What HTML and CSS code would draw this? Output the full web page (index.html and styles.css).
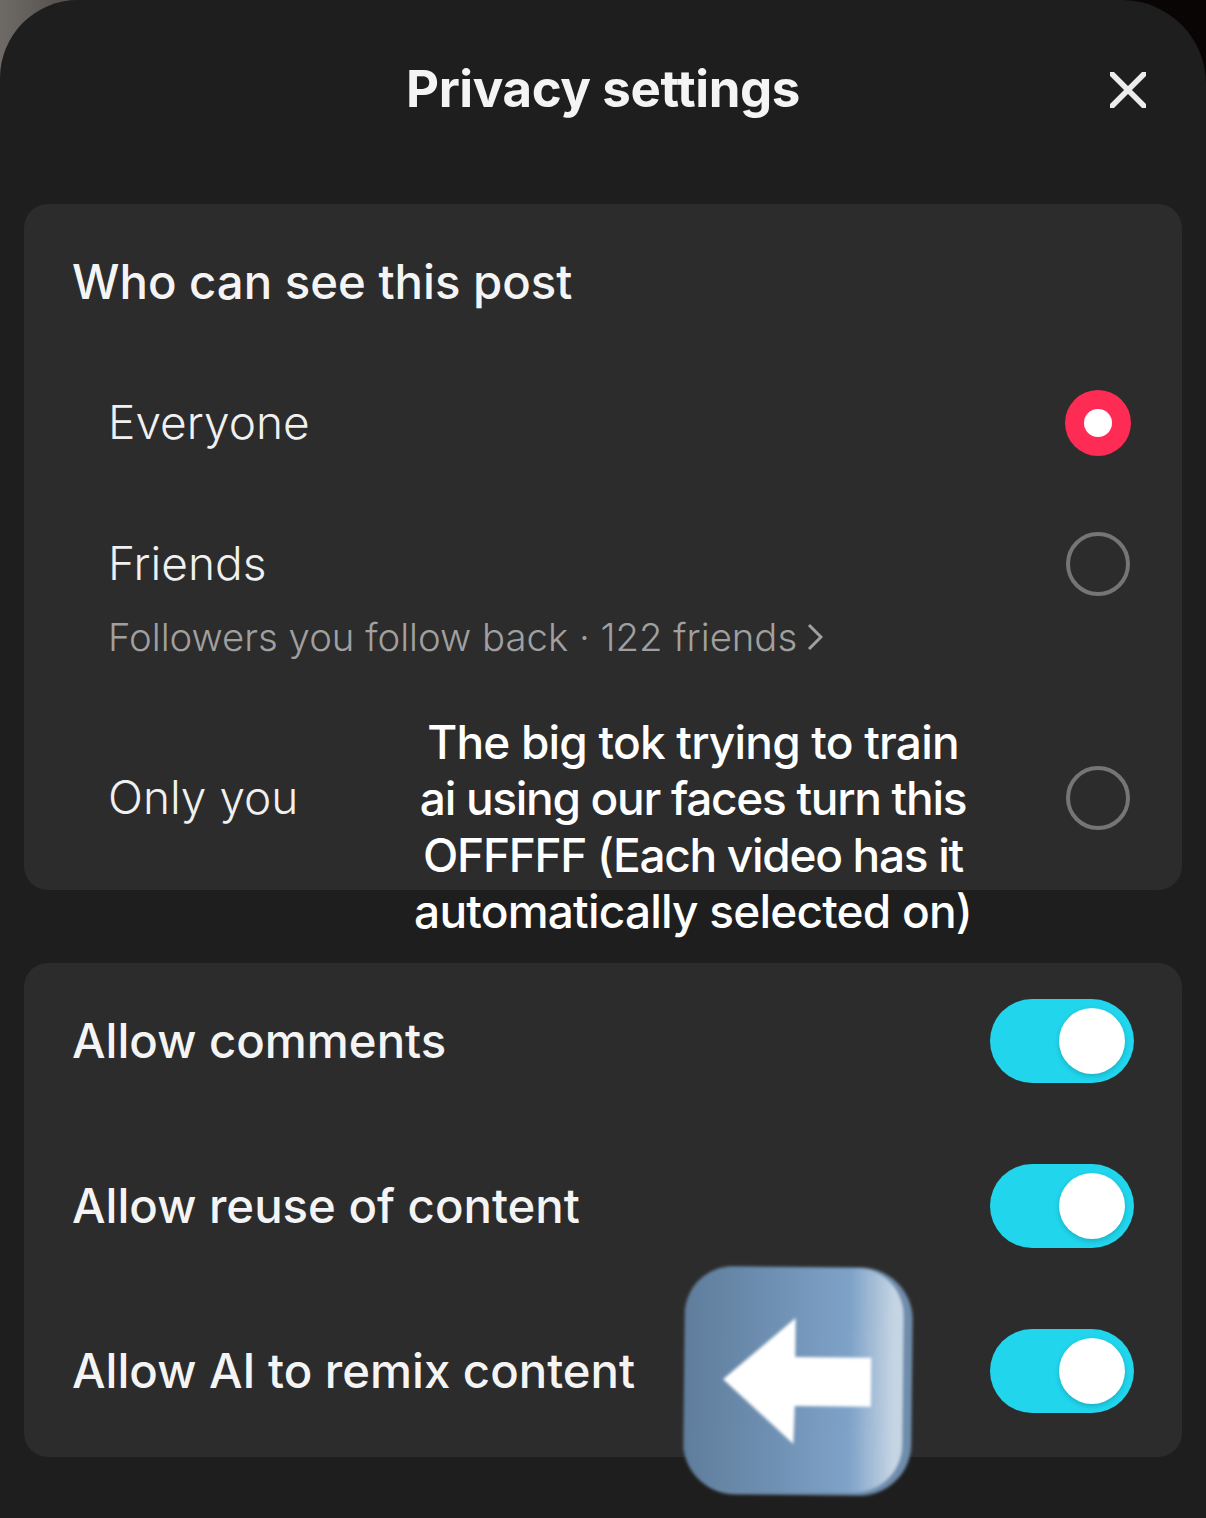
FILE: index.html
```html
<!DOCTYPE html>
<html lang="en">
  <head>
    <meta charset="UTF-8" />
    <title>Privacy settings</title>
    <link rel="stylesheet" href="styles.css">
  </head>
  <body>
    <div class="sheet">
      <!-- HEADER -->
      <div class="header">
        <h1 class="title">Privacy settings</h1>
        <svg class="close" viewBox="0 0 36 36" aria-label="Close">
          <path d="M2 2 L34 34 M34 2 L2 34" />
        </svg>
      </div>

      <!-- WHO CAN SEE -->
      <div class="panel panel-audience">
        <h2 class="panel-title">Who can see this post</h2>
        <div class="option option-first">
          <span class="label">Everyone</span>
          <span class="radio radio-on"></span>
        </div>
        <div class="option option-friends">
          <span class="label">Friends</span>
          <span class="radio"></span>
        </div>
        <div class="hint">
          Followers you follow back · 122 friends
          <svg class="chevron" viewBox="0 0 16 28"><path d="M2 2 L14 14 L2 26" /></svg>
        </div>
        <div class="option option-last">
          <span class="label">Only you</span>
          <span class="radio"></span>
        </div>
      </div>

      <!-- TOGGLES -->
      <div class="panel panel-toggles">
        <div class="toggle-row">
          <span class="toggle-label">Allow comments</span>
          <span class="toggle"><span class="knob"></span></span>
        </div>
        <div class="toggle-row">
          <span class="toggle-label">Allow reuse of content</span>
          <span class="toggle"><span class="knob"></span></span>
        </div>
        <div class="toggle-row">
          <span class="toggle-label">Allow AI to remix content</span>
          <span class="toggle"><span class="knob"></span></span>
        </div>
      </div>
    </div>

    <!-- Overlays burned into the video frame -->
    <div class="caption">
      <div>The big tok trying to train</div>
      <div class="caption-tight">ai using our faces turn this</div>
      <div class="caption-tight">OFFFFF (Each video has it</div>
      <div>automatically selected on)</div>
    </div>
    <div class="sticker">
      <div class="sticker-face"></div>
      <svg class="sticker-arrow" viewBox="0 0 150 128">
        <path d="M0 62 L72 0 L72 39 L148 39 L148 88 L72 88 L71 126 Z" />
      </svg>
    </div>
  </body>
</html>
```

FILE: styles.css
```css
* {
  box-sizing: border-box;
}

html,
body {
  margin: 0;
  height: 1518px;
  overflow: hidden;
}

body {
  font-family: Inter, "Liberation Sans", sans-serif;
  color: #f4f4f4;
  position: relative;
  background: linear-gradient(90deg, #6e6a66 0, #4a4542 8%, #120a08 30%, #0a0505 100%);
}

.sheet {
  height: 1518px;
  background: #1e1e1e;
  border-radius: 78px 84px 0 0;
  padding: 0 24px;
}

/* Header */
.header {
  height: 204px;
  position: relative;
}

.title {
  margin: 0;
  padding-top: 59px;
  text-align: center;
  font-size: 51px;
  line-height: 60px;
  font-weight: 700;
  letter-spacing: -0.4px;
}

.close {
  position: absolute;
  right: 36px;
  top: 72px;
  width: 36px;
  height: 36px;
}

.close path {
  fill: none;
  stroke: #ececec;
  stroke-width: 5.5;
  stroke-linecap: round;
}

/* Panels */
.panel {
  background: #2c2c2c;
  border-radius: 24px;
}

.panel-audience {
  height: 686px;
  padding: 53px 51px 0 48px;
}

.panel-title {
  margin: 0;
  font-size: 47.3px;
  line-height: 50px;
  font-weight: 500;
}

.option {
  display: flex;
  justify-content: space-between;
  align-items: center;
  height: 66px;
  padding-left: 36px;
}

.option-first {
  margin-top: 83px;
}

.option-friends {
  margin-top: 75px;
}

.option-last {
  margin-top: 108px;
}

.label {
  padding-bottom: 2px;
  font-size: 46px;
  font-weight: 300;
  color: #f0f0f0;
}

.hint {
  margin-top: 20px;
  padding-left: 36px;
  font-size: 38.3px;
  line-height: 40px;
  font-weight: 300;
  color: #a0a0a0;
  display: flex;
  align-items: center;
  gap: 10px;
}

.chevron {
  width: 16px;
  height: 28px;
}

.chevron path {
  fill: none;
  stroke: #a0a0a0;
  stroke-width: 3;
}

.radio {
  width: 64px;
  height: 64px;
  margin-right: 1px;
  border: 4px solid #757575;
  border-radius: 50%;
}

.radio-on {
  width: 66px;
  height: 66px;
  margin-right: 0;
  border: 0;
  background: #fe2c55;
  position: relative;
}

.radio-on::after {
  content: "";
  position: absolute;
  left: 19px;
  top: 19px;
  width: 28px;
  height: 28px;
  border-radius: 50%;
  background: #fff;
}

.panel-toggles {
  margin-top: 73px;
  height: 494px;
  padding: 36px 48px 44px 48px;
  display: flex;
  flex-direction: column;
  gap: 81px;
}

.toggle-row {
  display: flex;
  justify-content: space-between;
  align-items: center;
  height: 84px;
}

.toggle-label {
  padding-bottom: 2px;
  font-size: 47.3px;
  font-weight: 500;
}

.toggle {
  width: 144px;
  height: 84px;
  border-radius: 42px;
  background: #20d5ec;
  padding: 9px;
  display: flex;
  justify-content: flex-end;
}

.knob {
  width: 66px;
  height: 66px;
  border-radius: 50%;
  background: #fff;
  box-shadow: 0 2px 5px rgba(0, 0, 0, 0.18);
}

/* Video overlays */
.caption {
  position: absolute;
  left: 393px;
  top: 714px;
  width: 600px;
  text-align: center;
  font-size: 46px;
  line-height: 56.3px;
  font-weight: 500;
  letter-spacing: -0.8px;
  color: #fff;
}

.caption-tight {
  letter-spacing: -1.3px;
}

.sticker {
  position: absolute;
  left: 684px;
  top: 1267px;
  width: 228px;
  height: 228px;
  border-radius: 52px;
  transform: rotate(0.6deg);
  filter: blur(1.6px);
  background: #6f8cab;
}

.sticker-face {
  position: absolute;
  inset: 0 9px 3px 0;
  border-radius: 48px;
  background: linear-gradient(90deg, #5f7d9b 0, #7092b5 45%, #7fa3c8 76%, #c6d5e4 96%);
}

.sticker-arrow {
  position: absolute;
  left: 39px;
  top: 51px;
  width: 150px;
  height: 128px;
}

.sticker-arrow path {
  fill: #fff;
}
```
